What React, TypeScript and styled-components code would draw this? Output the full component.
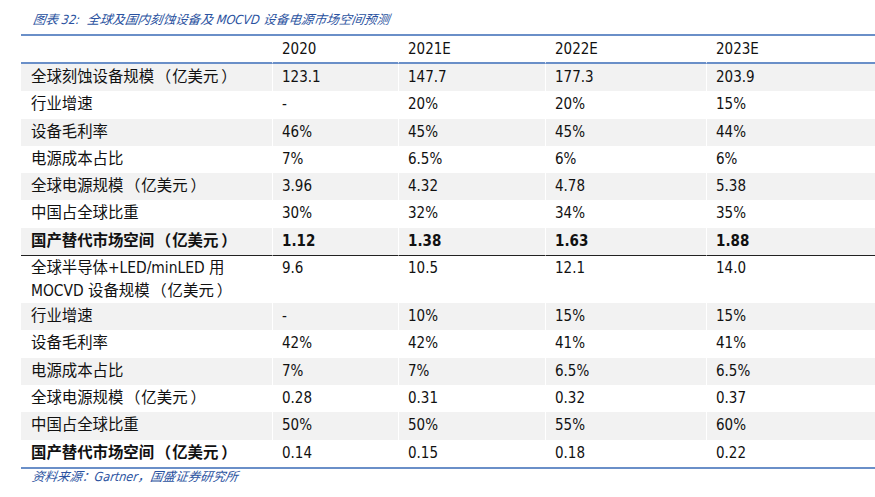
import React from "react";
import styled, { createGlobalStyle } from "styled-components";

const Global = createGlobalStyle`
  html, body { margin: 0; padding: 0; background: #fff; }
  body { width: 875px; height: 497px; overflow: hidden; }
`;

const Page = styled.div`
  width: 875px;
  height: 497px;
  padding: 10px 0 0 21px;
  box-sizing: border-box;
  font-family: "DejaVu Sans Condensed", "DejaVu Sans", "Noto Sans CJK SC", sans-serif;
`;

const Caption = styled.div`
  font-family: "DejaVu Sans Condensed", "Noto Sans CJK SC", sans-serif;
  font-style: italic;
  font-size: 12.6px;
  line-height: 20px;
  color: #2a52a0;
  padding-left: 10px;
  height: 24px;
  transform: skewX(-8deg);
  transform-origin: left bottom;
`;

const Table = styled.div`
  display: grid;
  grid-template-columns: 251px 126px 147px 161px 1fr;
  border-top: 2px solid #6a8fc8;
  border-bottom: 2px solid #6a8fc8;
  font-size: 15px;
  color: #111;
`;

const Cell = styled.div<{ $shade?: boolean; $bold?: boolean; $head?: boolean; $rule?: boolean; $tall?: boolean }>`
  background: ${(p) => (p.$shade ? "#f2f2f2" : "#fff")};
  font-weight: ${(p) => (p.$bold ? 700 : 400)};
  height: ${(p) => (p.$head ? "26px" : p.$tall ? "47px" : "27.3px")};
  line-height: ${(p) => (p.$tall ? "23px" : p.$head ? "26px" : "27.3px")};
  padding: ${(p) => (p.$tall ? "1px 9px 0" : "0 9px")};
  border-left: 1px solid #fff;
  box-sizing: border-box;
  white-space: nowrap;
  overflow: hidden;
  ${(p) => (p.$head ? "border-bottom: 2px solid #6a8fc8; height: 28px;" : "")}
  ${(p) => (p.$rule ? "border-bottom: 1px solid #222; height: 28.3px;" : "")}
  &:nth-child(5n + 1) {
    border-left: none;
    padding-left: 10px;
    font-size: 15.4px;
  }
`;

const Paren = styled.span<{ $side: "open" | "close" }>`
  display: inline-block;
  width: 18px;
  vertical-align: top;
  white-space: nowrap;
  text-align: ${(p) => (p.$side === "open" ? "right" : "left")};
  ${(p) => (p.$side === "open" ? "padding-right: 1px;" : "padding-left: 3px;")}
  box-sizing: border-box;
`;

const Unit = () => (
  <>
    <Paren $side="open">（</Paren>亿美元<Paren $side="close">）</Paren>
  </>
);

type Row = { label: React.ReactNode; vals: string[]; bold?: boolean; labelBold?: boolean; tall?: boolean };

const rows: Row[] = [
  { label: <>全球刻蚀设备规模<Unit /></>, vals: ["123.1", "147.7", "177.3", "203.9"] },
  { label: "行业增速", vals: ["-", "20%", "20%", "15%"] },
  { label: "设备毛利率", vals: ["46%", "45%", "45%", "44%"] },
  { label: "电源成本占比", vals: ["7%", "6.5%", "6%", "6%"] },
  { label: <>全球电源规模<Unit /></>, vals: ["3.96", "4.32", "4.78", "5.38"] },
  { label: "中国占全球比重", vals: ["30%", "32%", "34%", "35%"] },
  { label: <>国产替代市场空间<Unit /></>, vals: ["1.12", "1.38", "1.63", "1.88"], bold: true, labelBold: true },
  {
    label: (
      <>
        全球半导体+LED/minLED 用
        <br />
        MOCVD 设备规模<Unit />
      </>
    ),
    vals: ["9.6", "10.5", "12.1", "14.0"],
    tall: true,
  },
  { label: "行业增速", vals: ["-", "10%", "15%", "15%"] },
  { label: "设备毛利率", vals: ["42%", "42%", "41%", "41%"] },
  { label: "电源成本占比", vals: ["7%", "7%", "6.5%", "6.5%"] },
  { label: <>全球电源规模<Unit /></>, vals: ["0.28", "0.31", "0.32", "0.37"] },
  { label: "中国占全球比重", vals: ["50%", "50%", "55%", "60%"] },
  { label: <>国产替代市场空间<Unit /></>, vals: ["0.14", "0.15", "0.18", "0.22"], labelBold: true },
];

const Source = styled.div`
  font-family: "DejaVu Sans Condensed", "Noto Sans CJK SC", sans-serif;
  font-style: italic;
  font-size: 12.5px;
  line-height: 16px;
  color: #2a52a0;
  padding-left: 10px;
  transform: skewX(-8deg);
  transform-origin: left bottom;
`;

export default function App() {
  return (
    <Page>
      <Global />
      <Caption>图表 32:&nbsp; 全球及国内刻蚀设备及 MOCVD 设备电源市场空间预测</Caption>
      <Table>
        <Cell $head />
        {["2020", "2021E", "2022E", "2023E"].map((y) => (
          <Cell $head key={y}>
            {y}
          </Cell>
        ))}
        {rows.map((r, i) => {
          const shade = i % 2 === 0;
          const rule = i === 6;
          return (
            <React.Fragment key={i}>
              <Cell $shade={shade} $bold={r.labelBold} $rule={rule} $tall={r.tall}>
                {r.label}
              </Cell>
              {r.vals.map((v, j) => (
                <Cell key={j} $shade={shade} $bold={r.bold} $rule={rule} $tall={r.tall}>
                  {v}
                </Cell>
              ))}
            </React.Fragment>
          );
        })}
      </Table>
      <Source>资料来源：Gartner，国盛证券研究所</Source>
    </Page>
  );
}
